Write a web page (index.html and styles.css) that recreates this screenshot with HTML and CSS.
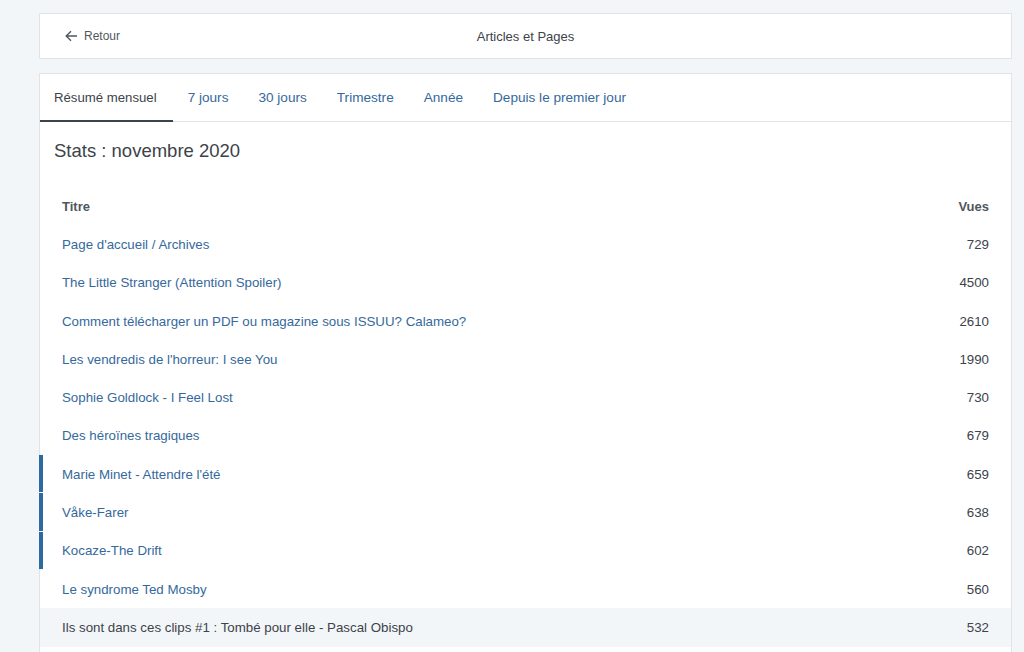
FILE: index.html
```html
<!DOCTYPE html>
<html lang="fr">
<head>
  <meta charset="UTF-8">
  <title>Articles et Pages</title>
  <meta name="viewport" content="width=device-width, initial-scale=1.0">
  <link rel="stylesheet" href="styles.css">
</head>
<body>

  <div class="wrap">

    <!-- Header -->
    <div class="header-card">
      <a class="back" href="#">
        <svg width="13" height="12" viewBox="0 0 13 12"><path d="M12 6H1.5M6 1.2L1.2 6 6 10.8" fill="none" stroke="#50575e" stroke-width="1.4"/></svg>
        Retour
      </a>
      <div class="header-title">Articles et Pages</div>
      <div class="header-spacer"></div>
    </div>

    <!-- Stats -->
    <div class="stats-card">
      <nav class="tabs">
        <a class="tab active" href="#">Résumé mensuel</a>
        <a class="tab" href="#">7 jours</a>
        <a class="tab" href="#">30 jours</a>
        <a class="tab" href="#">Trimestre</a>
        <a class="tab" href="#">Année</a>
        <a class="tab" href="#">Depuis le premier jour</a>
      </nav>

      <h2 class="stats-title">Stats : novembre 2020</h2>

      <div class="stats-table">
        <div class="row head">
          <span>Titre</span>
          <span>Vues</span>
        </div>
        <div id="rows"></div>
      </div>
    </div>

  </div>

  <script>
    const posts = [
      { title: "Page d'accueil / Archives", views: 729 },
      { title: "The Little Stranger (Attention Spoiler)", views: 4500 },
      { title: "Comment télécharger un PDF ou magazine sous ISSUU? Calameo?", views: 2610 },
      { title: "Les vendredis de l'horreur: I see You", views: 1990 },
      { title: "Sophie Goldlock - I Feel Lost", views: 730 },
      { title: "Des héroïnes tragiques", views: 679 },
      { title: "Marie Minet - Attendre l'été", views: 659, marked: true },
      { title: "Våke-Farer", views: 638, marked: true },
      { title: "Kocaze-The Drift", views: 602, marked: true },
      { title: "Le syndrome Ted Mosby", views: 560 },
      { title: "Ils sont dans ces clips #1 : Tombé pour elle - Pascal Obispo", views: 532, hover: true }
    ];

    const box = document.getElementById("rows");
    posts.forEach(p => {
      const row = document.createElement("div");
      row.className = "row" + (p.marked ? " marked" : "") + (p.hover ? " hover" : "");
      row.innerHTML = `
        <a class="title" href="#">${p.title}</a>
        <span class="views">${p.views}</span>
      `;
      box.appendChild(row);
    });
  </script>

</body>
</html>
```

FILE: styles.css
```css
body {
  margin: 0;
  background: #f3f6f8;
  font-family: 'Liberation Sans', Arial, sans-serif;
  font-size: 13.3px;
  color: #3c434a;
}

a {
  text-decoration: none;
}

.wrap {
  width: 973px;
  margin-left: 39px;
  padding-top: 13px;
}

.header-card {
  display: flex;
  align-items: center;
  height: 44px;
  background: white;
  border: 1px solid #e0e4e7;
  margin-bottom: 14px;
}

.back {
  flex: 0 0 160px;
  display: flex;
  align-items: center;
  gap: 6px;
  padding-left: 25px;
  color: #50575e;
  font-size: 12px;
}

.header-title {
  flex: 1;
  text-align: center;
  color: #3c434a;
  font-size: 13px;
}

.header-spacer {
  flex: 0 0 185px;
}

.stats-card {
  background: white;
  border: 1px solid #e0e4e7;
  border-bottom: none;
  min-height: 600px;
}

.tabs {
  display: flex;
  height: 47px;
  border-bottom: 1px solid #e0e4e7;
}

.tab {
  display: flex;
  align-items: center;
  padding: 0 15px;
  color: #35699c;
  font-size: 13.6px;
  margin-bottom: -1px;
  border-bottom: 2px solid transparent;
}

.tab.active {
  color: #3c434a;
  font-size: 13.2px;
  padding: 0 16px 0 14px;
  border-bottom-color: #3c434a;
}

.stats-title {
  margin: 0;
  padding: 18px 15px 0 14px;
  height: 40px;
  font-size: 18.5px;
  font-weight: normal;
  color: #3c434a;
}

.stats-table {
  margin-top: 7px;
}

.row {
  position: relative;
  display: flex;
  align-items: center;
  justify-content: space-between;
  height: 38.3px;
  padding: 0 22px 0 22px;
}

.row.head {
  font-weight: bold;
  font-size: 13px;
  color: #50575e;
}

.title {
  color: #35699c;
}

.views {
  color: #3c434a;
}

.row.marked::before {
  content: "";
  position: absolute;
  left: -1px;
  top: 0;
  bottom: 1px;
  width: 4px;
  background: #2d6aa1;
}

.row.hover {
  background: #f3f6f8;
}

.row.hover .title {
  color: #3c434a;
}
```
